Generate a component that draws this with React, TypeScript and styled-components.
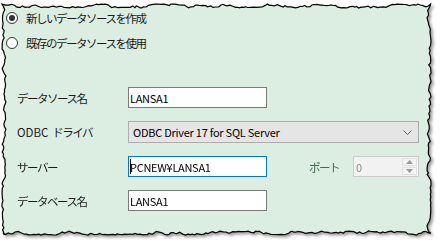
import * as React from 'react';
import styled, { createGlobalStyle } from 'styled-components';

const FRAME_W = 429;
const FRAME_H = 231;

// torn paper edge, same points for the clip and the outline
function tornEdge(w: number, h: number, seed: number): [number, number][] {
  let s = seed;
  const rnd = () => {
    s = (s * 16807) % 2147483647;
    return s / 2147483647;
  };
  const amp = 4;
  let off = 2;
  const walk = () => {
    off += (rnd() - 0.5) * 3.6;
    if (off < 0) off = -off * 0.5;
    if (off > amp) off = amp - (off - amp);
    return +off.toFixed(1);
  };
  const pts: [number, number][] = [];
  for (let x = 0; x < w; x += 1.5 + rnd() * 2) pts.push([+x.toFixed(1), walk()]);
  for (let y = 0; y < h; y += 1.5 + rnd() * 2) pts.push([w - walk(), +y.toFixed(1)]);
  for (let x = w; x > 0; x -= 1.5 + rnd() * 2) pts.push([+x.toFixed(1), h - walk()]);
  for (let y = h; y > 0; y -= 1.5 + rnd() * 2) pts.push([walk(), +y.toFixed(1)]);
  return pts;
}

const EDGE = tornEdge(FRAME_W, FRAME_H, 91);
const CLIP = `polygon(${EDGE.map(([x, y]) => `${x}px ${y}px`).join(', ')})`;
const OUTLINE = EDGE.map(([x, y]) => `${x},${y}`).join(' ');

const GlobalStyle = createGlobalStyle`
  body {
    margin: 0;
    background: #fff;
    font-family: "Noto Sans CJK JP", "Noto Sans", sans-serif;
    color: #1a1a1a;
  }
`;

const Page = styled.div`
  width: 441px;
  height: 244px;
  box-sizing: border-box;
  padding: 4px 0 0 2px;
  overflow: hidden;
`;

const Frame = styled.div`
  position: relative;
  width: ${FRAME_W}px;
  height: ${FRAME_H}px;
  filter: drop-shadow(2px 2px 1.5px rgba(0, 0, 0, 0.4));
`;

const Panel = styled.div`
  height: 100%;
  box-sizing: border-box;
  background: #dcede1;
  clip-path: ${CLIP};
  padding-top: 6px;
  display: flex;
  flex-direction: column;
`;

const Edge = styled.svg`
  position: absolute;
  left: 0;
  top: 0;
  overflow: visible;
  pointer-events: none;
`;

const RadioGroup = styled.div`
  display: flex;
  flex-direction: column;
  gap: 9px;
  padding-left: 4px;
`;

const RadioRow = styled.label`
  display: flex;
  align-items: center;
  gap: 8px;
  height: 16px;
  font-size: 11.5px;
  letter-spacing: -1.5px;
  white-space: nowrap;
`;

const RadioDot = styled.span<{ $checked?: boolean }>`
  flex: none;
  width: 12px;
  height: 12px;
  box-sizing: border-box;
  border-radius: 50%;
  border: 1px solid #333;
  background: #fff;
  display: flex;
  align-items: center;
  justify-content: center;
  &::after {
    content: '';
    width: 6px;
    height: 6px;
    border-radius: 50%;
    background: #333;
    display: ${({ $checked }) => ($checked ? 'block' : 'none')};
  }
`;

const Form = styled.div`
  margin-top: 36px;
  padding-left: 15px;
  display: grid;
  grid-template-columns: 111px 139px 42px 44px 66px;
  row-gap: 13px;
  align-items: center;
`;

const Label = styled.div<{ $col?: number; $muted?: boolean }>`
  grid-column: ${({ $col }) => $col ?? 1};
  font-size: 11.5px;
  letter-spacing: -1.5px;
  white-space: nowrap;
  color: ${({ $muted }) => ($muted ? '#3d6f48' : '#1a1a1a')};
`;

const Latin = styled.span`
  letter-spacing: 0;
  margin-right: 4px;
`;

const Field = styled.div<{ $focused?: boolean }>`
  position: relative;
  height: 21px;
  box-sizing: border-box;
  border: 1px solid ${({ $focused }) => ($focused ? '#0078d7' : '#7a7a7a')};
  background: #fff;
  padding-left: 1px;
  display: flex;
  align-items: center;
  font-size: 11px;
  letter-spacing: -0.3px;
  color: #000;
  &::before {
    content: '';
    display: ${({ $focused }) => ($focused ? 'block' : 'none')};
    position: absolute;
    left: 1px;
    top: 2px;
    width: 1px;
    height: 15px;
    background: #000;
  }
`;

const Select = styled.div`
  grid-column: 2 / 6;
  height: 22px;
  box-sizing: border-box;
  border: 1px solid #adadad;
  background: #e5e5e5;
  display: flex;
  align-items: center;
  justify-content: space-between;
  padding: 0 6px 0 4px;
  font-size: 11px;
  letter-spacing: -0.25px;
  color: #000;
`;

const Spin = styled.div`
  height: 21px;
  box-sizing: border-box;
  border: 1px solid #cccccc;
  background: #f2f2f2;
  display: flex;
  align-items: stretch;
  font-size: 11px;
  color: #8a8a8a;
`;

const SpinValue = styled.div`
  flex: 1;
  padding-left: 2px;
  display: flex;
  align-items: center;
`;

const SpinButtons = styled.div`
  width: 15px;
  display: flex;
  flex-direction: column;
  padding: 1px 1px 1px 0;
  gap: 1px;
`;

const SpinButton = styled.div`
  flex: 1;
  border: 1px solid #e0e0e0;
  background: #f4f4f4;
  display: flex;
  align-items: center;
  justify-content: center;
`;

function Chevron() {
  return (
    <svg width="9" height="5" viewBox="0 0 9 5">
      <polyline points="0.5,0.5 4.5,4.5 8.5,0.5" fill="none" stroke="#606060" strokeWidth="1" />
    </svg>
  );
}

function Arrow({ up }: { up?: boolean }) {
  return (
    <svg width="7" height="4" viewBox="0 0 7 4">
      <polygon points={up ? '0,4 3.5,0 7,4' : '0,0 3.5,4 7,0'} fill="#9a9a9a" />
    </svg>
  );
}

export default function App() {
  return (
    <Page>
      <GlobalStyle />
      <Frame>
        <Panel>
          <RadioGroup>
            <RadioRow>
              <RadioDot $checked />
              新しいデータソースを作成
            </RadioRow>
            <RadioRow>
              <RadioDot />
              既存のデータソースを使用
            </RadioRow>
          </RadioGroup>

          <Form>
            <Label>データソース名</Label>
            <Field>LANSA1</Field>

            <Label>
              <Latin>ODBC</Latin>ドライバ
            </Label>
            <Select>
              ODBC Driver 17 for SQL Server
              <Chevron />
            </Select>

            <Label>サーバー</Label>
            <Field $focused>PCNEW¥LANSA1</Field>
            <Label $col={4} $muted>
              ポート
            </Label>
            <Spin>
              <SpinValue>0</SpinValue>
              <SpinButtons>
                <SpinButton>
                  <Arrow up />
                </SpinButton>
                <SpinButton>
                  <Arrow />
                </SpinButton>
              </SpinButtons>
            </Spin>

            <Label>データベース名</Label>
            <Field>LANSA1</Field>
          </Form>
        </Panel>
        <Edge width={FRAME_W} height={FRAME_H}>
          <polygon points={OUTLINE} fill="none" stroke="#000" strokeWidth="1.2" />
        </Edge>
      </Frame>
    </Page>
  );
}
